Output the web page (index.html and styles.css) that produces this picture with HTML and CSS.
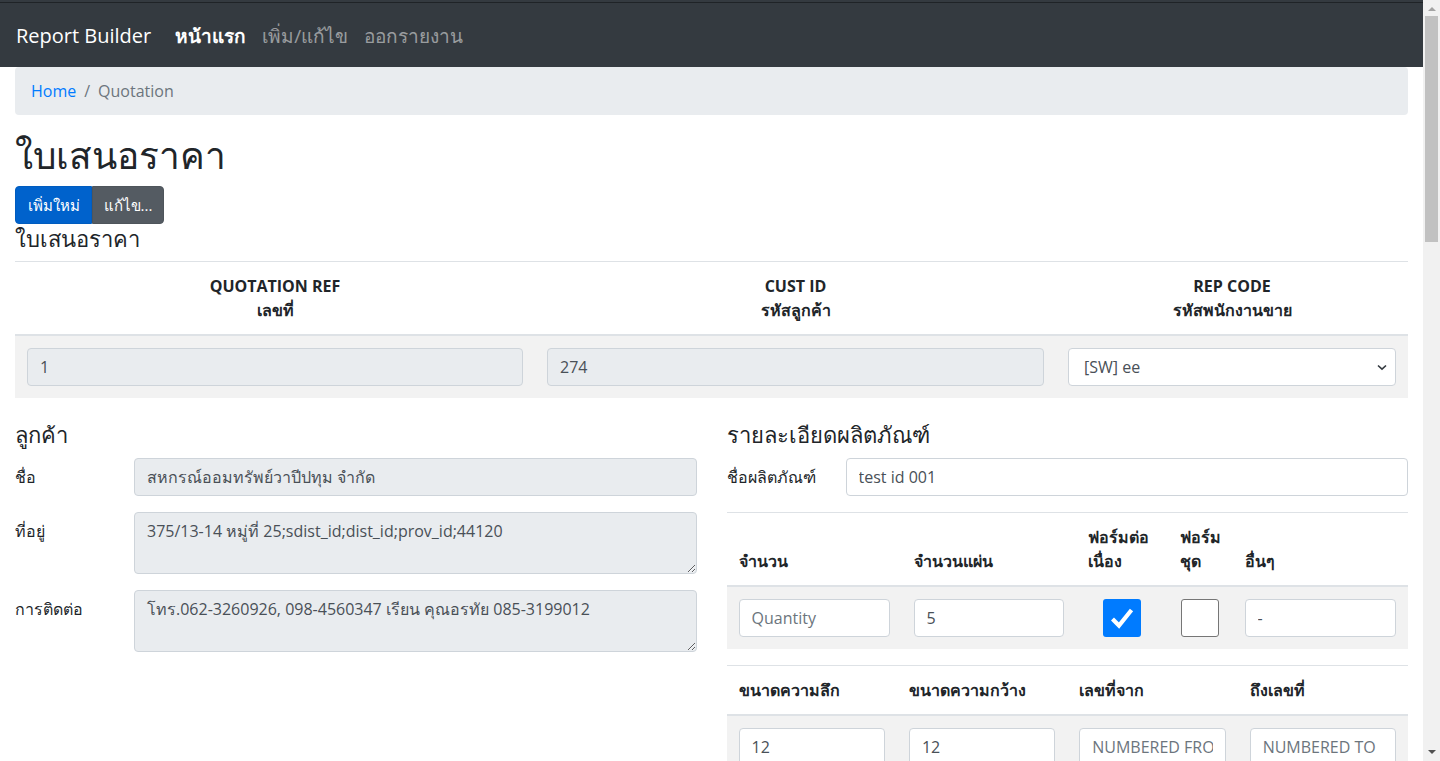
FILE: index.html
```html
<!DOCTYPE html>
<html lang="th">
<head>
<meta charset="utf-8">
<title>Report Builder</title>
<link rel="stylesheet" href="styles.css">
</head>
<body>
<div class="screen">
  <div class="viewport">
    <div class="topline"></div>
    <nav class="navbar">
      <span class="brand">Report Builder</span>
      <a class="nav-link active">หน้าแรก</a>
      <a class="nav-link">เพิ่ม/แก้ไข</a>
      <a class="nav-link">ออกรายงาน</a>
    </nav>
    <div class="container">
      <ol class="breadcrumb">
        <li class="crumb"><a class="crumb-link">Home</a></li>
        <li class="crumb sep">/</li>
        <li class="crumb current">Quotation</li>
      </ol>
      <h1 class="page-title">ใบเสนอราคา</h1>
      <div class="btn-group">
        <button class="btn btn-primary">เพิ่มใหม่</button>
        <button class="btn btn-secondary">แก้ไข...</button>
      </div>
      <h4 class="title first">ใบเสนอราคา</h4>
      <table class="table head-table">
        <colgroup><col class="c520"><col class="c521"><col></colgroup>
        <thead>
          <tr>
            <th class="center">QUOTATION REF<br>เลขที่</th>
            <th class="center">CUST ID<br>รหัสลูกค้า</th>
            <th class="center">REP CODE<br>รหัสพนักงานขาย</th>
          </tr>
        </thead>
        <tbody>
          <tr class="striped">
            <td><input class="form-control" readonly value="1"></td>
            <td><input class="form-control" readonly value="274"></td>
            <td>
              <div class="select">
                <span>[SW] ee</span>
                <svg class="chev" width="10" height="7" viewBox="0 0 10 7"><path d="M1 1.5 L5 5.2 L9 1.5" fill="none" stroke="#343a40" stroke-width="1.6"/></svg>
              </div>
            </td>
          </tr>
        </tbody>
      </table>

      <div class="row">
        <div class="col">
          <h4 class="title">ลูกค้า</h4>
          <div class="form-group">
            <label class="col-label">ชื่อ</label>
            <input class="form-control" readonly value="สหกรณ์ออมทรัพย์วาปีปทุม จำกัด">
          </div>
          <div class="form-group">
            <label class="col-label">ที่อยู่</label>
            <textarea class="form-control area" readonly rows="2">375/13-14 หมู่ที่ 25;sdist_id;dist_id;prov_id;44120</textarea>
          </div>
          <div class="form-group">
            <label class="col-label">การติดต่อ</label>
            <textarea class="form-control area" readonly rows="2">โทร.062-3260926, 098-4560347 เรียน คุณอรทัย 085-3199012</textarea>
          </div>
        </div>
        <div class="col">
          <h4 class="title">รายละเอียดผลิตภัณฑ์</h4>
          <div class="form-group">
            <label class="col-label">ชื่อผลิตภัณฑ์</label>
            <input class="form-control white" value="test id 001">
          </div>
          <table class="table">
            <colgroup><col class="w175"><col class="w174"><col class="w92"><col class="w65"><col></colgroup>
            <thead>
              <tr>
                <th>จำนวน</th>
                <th>จำนวนแผ่น</th>
                <th>ฟอร์มต่อ<br>เนื่อง</th>
                <th>ฟอร์ม<br>ชุด</th>
                <th>อื่นๆ</th>
              </tr>
            </thead>
            <tbody>
              <tr class="striped">
                <td><input class="form-control white" placeholder="Quantity"></td>
                <td><input class="form-control white" value="5"></td>
                <td class="center"><span class="check on"><svg width="26" height="24" viewBox="0 0 26 24"><path d="M3.5 13 L10 19.5 L22.5 4" fill="none" stroke="#fff" stroke-width="4.2"/></svg></span></td>
                <td class="center"><span class="check off"></span></td>
                <td><input class="form-control white" value="-"></td>
              </tr>
            </tbody>
          </table>
          <table class="table">
            <colgroup><col class="q"><col class="q"><col class="q"><col class="q"></colgroup>
            <thead>
              <tr>
                <th>ขนาดความลึก</th>
                <th>ขนาดความกว้าง</th>
                <th>เลขที่จาก</th>
                <th>ถึงเลขที่</th>
              </tr>
            </thead>
            <tbody>
              <tr class="striped">
                <td><input class="form-control white" value="12"></td>
                <td><input class="form-control white" value="12"></td>
                <td><input class="form-control white" placeholder="NUMBERED FROM"></td>
                <td><input class="form-control white" placeholder="NUMBERED TO"></td>
              </tr>
            </tbody>
          </table>
        </div>
      </div>
    </div>
  </div>
  <div class="scrollbar">
    <div class="arrow up"></div>
    <div class="track"><div class="thumb"></div></div>
    <div class="arrow down"></div>
  </div>
</div>
</body>
</html>
```

FILE: styles.css
```css
* { box-sizing: border-box; }
html, body { margin: 0; padding: 0; height: 761px; overflow: hidden; }
body {
  font-family: "Open Sans", "Noto Sans", "DejaVu Sans", sans-serif;
  font-size: 16px;
  line-height: 1.5;
  color: #212529;
  background: #fff;
}
.screen { display: flex; width: 1440px; height: 761px; }
.viewport { width: 1423px; height: 761px; overflow: hidden; }

.topline { height: 3px; background: #343a40; border-bottom: 1px solid #1f2327; }
.navbar {
  height: 64px;
  background: #343a40;
  display: flex;
  align-items: center;
  padding: 1px 16px 0;
}
.brand { color: #fff; font-size: 20px; line-height: 30px; margin-right: 16px; }
.nav-link { color: rgba(255,255,255,.5); font-size: 19px; line-height: 30px; padding: 0 8px; }
.nav-link.active { color: #fff; font-weight: 600; }

.container { padding: 0 15px; }
.breadcrumb {
  list-style: none;
  margin: 0 0 16px;
  padding: 12px 16px;
  background: #e9ecef;
  border-radius: 4px;
  display: flex;
  height: 48px;
}
.crumb { color: #6c757d; }
.crumb-link { color: #007bff; }
.sep { padding: 0 8px; }

.page-title { font-size: 37px; font-weight: 400; line-height: 48px; margin: 0 0 7px; }

.btn-group { display: flex; }
.btn {
  font-family: inherit;
  font-size: 15px;
  line-height: 24px;
  height: 38px;
  padding: 6px 0;
  border: 1px solid transparent;
  color: #fff;
  white-space: nowrap;
  text-align: center;
}
.btn-primary { background: #0062cc; border-color: #005cbf; border-radius: 4px 0 0 4px; width: 77px; }
.btn-secondary { background: #545b62; border-color: #4e555b; border-radius: 0 4px 4px 0; width: 72px; }

.title { font-size: 22px; font-weight: 400; line-height: 29px; margin: 0 0 8px; }
.row .title { margin: 6px 0 9px; }

.table { width: 100%; border-collapse: collapse; table-layout: fixed; margin-bottom: 16px; }
.table th, .table td { padding: 12px; border-top: 1px solid #dee2e6; vertical-align: top; }
.table th { text-align: left; vertical-align: bottom; font-weight: 700; border-bottom: 2px solid #dee2e6; line-height: 24px; }
.table th.center, .table td.center { text-align: center; }
.table td.center { vertical-align: middle; }
.striped td { background: #f2f2f2; }
.c520 { width: 520px; }
.c521 { width: 521px; }
.w175 { width: 175px; }
.w174 { width: 174px; }
.w92 { width: 92px; }
.w65 { width: 65px; }
.q { width: 25%; }

.form-control {
  display: block;
  width: 100%;
  height: 38px;
  padding: 6px 12px;
  font-family: inherit;
  font-size: 16px;
  line-height: 24px;
  color: #495057;
  background: #e9ecef;
  border: 1px solid #ced4da;
  border-radius: 4px;
  outline: none;
}
.form-control.white { background: #fff; }
.form-control::placeholder { color: #6c757d; }
.area { height: 62px; resize: vertical; }

.select {
  height: 38px;
  display: flex;
  align-items: center;
  justify-content: space-between;
  padding: 6px 8px 6px 15px;
  background: #fff;
  border: 1px solid #ced4da;
  border-radius: 4px;
  color: #495057;
}
.chev { display: block; }

.row { display: grid; grid-template-columns: 1fr 1fr; column-gap: 30px; }
.form-group { display: grid; grid-template-columns: 119px 1fr; margin-bottom: 16px; }
.col-label { padding-top: 7px; line-height: 24px; }

.check { display: inline-block; width: 38px; height: 38px; border-radius: 3px; vertical-align: middle; }
.check.on { background: #007bff; display: inline-flex; align-items: center; justify-content: center; }
.check.on svg { display: block; }
.check.off { width: 38px; background: #fff; border: 1px solid #767676; }

.scrollbar { width: 17px; height: 761px; background: #f1f1f1; display: flex; flex-direction: column; align-items: center; }
.arrow { width: 0; height: 0; border-left: 4px solid transparent; border-right: 4px solid transparent; }
.arrow.up { margin: 7px 0 4px; border-bottom: 4px solid #a3a3a3; }
.arrow.down { margin: 4px 0 7px; border-top: 4px solid #505050; }
.track { flex: 1; width: 100%; padding: 0 2px; }
.thumb { height: 226px; background: #c1c1c1; margin-top: 1px; }
```
